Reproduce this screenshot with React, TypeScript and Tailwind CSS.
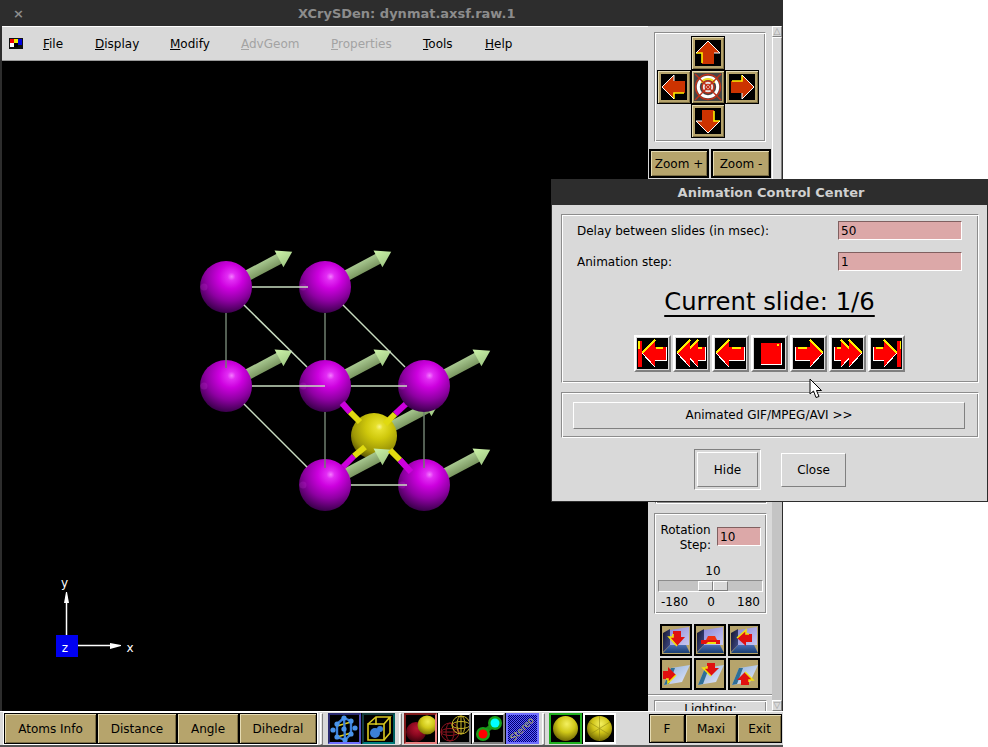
import type { ReactNode } from "react"

const groove = "border border-t-[#8c8c8c] border-l-[#8c8c8c] border-r-white border-b-white shadow-[inset_1px_1px_0_#fff,inset_-1px_-1px_0_#8c8c8c]"
const raised = "border border-t-white border-l-white border-r-[#808080] border-b-[#808080]"
const tanFace = "bg-[#b6a46c] shadow-[inset_1px_1px_0_#e6dcb4,inset_-1px_-1px_0_#7c6e44] flex items-center justify-center text-[12px] text-black"
const tanBtn = `${tanFace} border-2 border-black`
const pinkInput = "bg-[#dca8a8] border border-t-[#806060] border-l-[#806060] border-r-white border-b-white text-[12px] pl-[2px] flex items-center text-black"

const menus = [
  { label: "File", w: "w-[52px]" },
  { label: "Display", w: "w-[75px]" },
  { label: "Modify", w: "w-[71px]" },
  { label: "AdvGeom", w: "w-[90px]", off: true },
  { label: "Properties", w: "w-[92px]", off: true },
  { label: "Tools", w: "w-[62px]" },
  { label: "Help", w: "w-[50px]" },
]

const purple = [
  [226, 287],
  [325, 287],
  [226, 386],
  [325, 386],
  [424, 386],
  [325, 485],
  [424, 485],
]

const lines = [
  { x1: 252, y1: 287, x2: 308, y2: 287, c: "#c8dcc0" },
  { x1: 252, y1: 386, x2: 325, y2: 386, c: "#c8dcc0" },
  { x1: 351, y1: 386, x2: 407, y2: 386, c: "#c8dcc0" },
  { x1: 351, y1: 485, x2: 407, y2: 485, c: "#c8dcc0" },
  { x1: 226, y1: 313, x2: 226, y2: 368, c: "#6f7f6f" },
  { x1: 325, y1: 313, x2: 325, y2: 360, c: "#6f7f6f" },
  { x1: 325, y1: 412, x2: 325, y2: 468, c: "#6f7f6f" },
  { x1: 424, y1: 412, x2: 424, y2: 468, c: "#6f7f6f" },
  { x1: 244, y1: 305, x2: 307, y2: 367, c: "#c8dcc0" },
  { x1: 343, y1: 305, x2: 405, y2: 367, c: "#c8dcc0" },
  { x1: 244, y1: 404, x2: 307, y2: 467, c: "#c8dcc0" },
]

const bonds = [
  { m: [342, 403], y: [350, 412], e: [360, 422] },
  { m: [407, 403], y: [395, 414], e: [385, 424] },
  { m: [343, 467], y: [354, 456], e: [365, 447] },
  { m: [411, 472], y: [400, 460], e: [390, 450] },
]

const Arrow3d = ({ x, y }: { x: number; y: number }) => (
  <g transform={`translate(${x} ${y}) rotate(-28)`}>
    <rect x={0} y={-5.5} width={61} height={11} fill="url(#shaft)" />
    <polygon points="60,-9.5 60,9.5 75,0" fill="url(#head)" />
  </g>
)

const Scene = () => (
  <svg viewBox="2 61 646 650" className="w-full h-full block">
    <defs>
      <radialGradient id="violet" cx="0.56" cy="0.3" r="0.78" fx="0.61" fy="0.3">
        <stop offset="0" stopColor="#f47cff" />
        <stop offset="0.1" stopColor="#e22cf4" />
        <stop offset="0.3" stopColor="#cc00de" />
        <stop offset="0.6" stopColor="#8e00a2" />
        <stop offset="1" stopColor="#200030" />
      </radialGradient>
      <radialGradient id="gold" cx="0.56" cy="0.3" r="0.78" fx="0.62" fy="0.3">
        <stop offset="0" stopColor="#f8f48c" />
        <stop offset="0.1" stopColor="#e6e02c" />
        <stop offset="0.35" stopColor="#cfc80c" />
        <stop offset="0.7" stopColor="#9c9606" />
        <stop offset="1" stopColor="#403c00" />
      </radialGradient>
      <linearGradient id="shaft" x1="0" y1="0" x2="0" y2="1">
        <stop offset="0" stopColor="#a8c890" />
        <stop offset="1" stopColor="#7a9660" />
      </linearGradient>
      <linearGradient id="head" x1="0" y1="0" x2="0" y2="1">
        <stop offset="0" stopColor="#cef4aa" />
        <stop offset="1" stopColor="#a0c884" />
      </linearGradient>
    </defs>
    <Arrow3d x={374} y={436} />
    <circle cx={374} cy={436} r={23} fill="url(#gold)" />
    {purple.map(([x, y]) => (
      <Arrow3d key={`${x}-${y}`} x={x} y={y} />
    ))}
    {bonds.map((b, i) => (
      <g key={i} strokeWidth={6}>
        <line x1={b.m[0]} y1={b.m[1]} x2={b.y[0]} y2={b.y[1]} stroke="#cc00dc" />
        <line x1={b.y[0]} y1={b.y[1]} x2={b.e[0]} y2={b.e[1]} stroke="#e0da10" />
      </g>
    ))}
    {purple.map(([x, y]) => (
      <g key={`${x}:${y}`}>
        <circle cx={x} cy={y} r={26} fill="url(#violet)" />
        <circle cx={x - 22} cy={y} r={3.5} fill="#e040f0" opacity={0.18} />
      </g>
    ))}
    <line x1={411} y1={472} x2={400} y2={460} stroke="#cc00dc" strokeWidth={6} />
    <line x1={342} y1={403} x2={350} y2={412} stroke="#cc00dc" strokeWidth={6} />
    {lines.map((l, i) => (
      <line key={i} x1={l.x1} y1={l.y1} x2={l.x2} y2={l.y2} stroke={l.c} strokeWidth={1.5} />
    ))}

    <rect x={56} y={635} width={22} height={22} fill="#0000f0" />
    <line x1={66.5} y1={635} x2={66.5} y2={600} stroke="#fff" strokeWidth={1.5} />
    <polygon points="64,603 69,603 67,592 66,592" fill="#fff" />
    <line x1={78} y1={645.5} x2={112} y2={645.5} stroke="#fff" strokeWidth={1.5} />
    <polygon points="110,643 110,649 121,646 121,645" fill="#fff" />
    <text x={64.5} y={587} fill="#fff" fontSize={12} textAnchor="middle">y</text>
    <text x={130} y={652} fill="#fff" fontSize={12} textAnchor="middle">x</text>
    <text x={65} y={652} fill="#fff" fontSize={12} textAnchor="middle">z</text>
  </svg>
)

// arrow shapes for the navigation pad, drawn pointing up then rotated
const NavArrow = ({ rot }: { rot: number }) => (
  <svg viewBox="0 0 26 26" className="w-[26px] h-[26px] block bg-black">
    <g transform={`rotate(${rot} 13 13)`}>
      <polygon points="13,1 25,13 19,13 19,24 7,24 7,13 1,13" fill="#cc3300" />
      <polyline points="1,13 7,13 7,23" fill="none" stroke="#ffee00" strokeWidth={1.6} />
      <polyline points="1,13 13,1 25,13 19,13" fill="none" stroke="#fff" strokeWidth={1} />
    </g>
  </svg>
)

const NavCenter = () => (
  <svg viewBox="0 0 26 26" className="w-[28px] h-[28px] block bg-[#444]">
    <circle cx={13} cy={13} r={11.5} fill="none" stroke="#c03018" strokeWidth={1.4} />
    <circle cx={13} cy={13} r={9} fill="none" stroke="#fff" strokeWidth={2.8} />
    <path d="M7 9a7 7 0 0 1 12 0" fill="none" stroke="#eedd22" strokeWidth={2} />
    <circle cx={13} cy={13} r={5.5} fill="#e8e8e8" stroke="#c03018" strokeWidth={1.4} />
    <circle cx={13} cy={13} r={2.6} fill="#fff" stroke="#c03018" strokeWidth={1} />
    <line x1={1} y1={1} x2={25} y2={25} stroke="#c03018" strokeWidth={1.3} />
    <line x1={25} y1={1} x2={1} y2={25} stroke="#c03018" strokeWidth={1.3} />
  </svg>
)

const NavBtn = ({ children }: { children: ReactNode }) => (
  <div className="w-[34px] h-[34px] bg-[#b6a46c] border border-black shadow-[inset_1px_1px_0_#e6dcb4,inset_-1px_-1px_0_#7c6e44] flex items-center justify-center">
    {children}
  </div>
)

// red player arrows: the base shape points left, "flip" mirrors it
const Head = ({ x }: { x: number }) => (
  <>
    <polygon points={`${x},15 ${x + 13},2 ${x + 13},29`} fill="#ff0000" />
    <line x1={x} y1={15} x2={x + 13} y2={2} stroke="#ffee00" strokeWidth={1.5} />
    <line x1={x} y1={15} x2={x + 13} y2={29} stroke="#fff" strokeWidth={1} />
  </>
)

const Shaft = ({ x }: { x: number }) => (
  <>
    <rect x={x} y={9} width={29 - x} height={13} fill="#ff0000" />
    <rect x={x + 3} y={9} width={26 - x - 3} height={2} fill="#ffee00" />
    <polyline points={`${x},22 29,22 29,9`} fill="none" stroke="#fff" strokeWidth={1} />
  </>
)

const PlayIcon = ({ kind, flip }: { kind: string; flip?: boolean }) => (
  <svg viewBox="0 0 31 31" className="w-[31px] h-[31px] block bg-black" shapeRendering="crispEdges">
    <g transform={flip ? "translate(31 0) scale(-1 1)" : undefined}>
      {kind === "end" && (
        <>
          <Shaft x={16} />
          <Head x={5} />
          <rect x={1} y={3} width={4} height={26} fill="#ff0000" />
          <rect x={1} y={3} width={1.5} height={8} fill="#ffee00" />
        </>
      )}
      {kind === "fast" && (
        <>
          <Shaft x={19} />
          <Head x={9} />
          <Head x={1} />
        </>
      )}
      {kind === "step" && (
        <>
          <Shaft x={14} />
          <Head x={1} />
        </>
      )}
    </g>
    {kind === "stop" && (
      <>
        <rect x={7} y={5} width={20} height={21} fill="#ff0000" />
        <polyline points="7,26 27,26 27,5" fill="none" stroke="#fff" strokeWidth={1} />
        <rect x={23} y={6} width={2} height={2} fill="#ffee00" />
      </>
    )}
  </svg>
)

const playButtons = [
  { kind: "end" },
  { kind: "fast" },
  { kind: "step" },
  { kind: "stop" },
  { kind: "step", flip: true },
  { kind: "fast", flip: true },
  { kind: "end", flip: true },
]

// wall / floor icons of the view buttons
const WallIcon = ({ rot }: { rot: number }) => (
  <svg viewBox="0 0 28 28" className="w-[28px] h-[28px] block">
    <defs>
      <linearGradient id="wall" x1="0" y1="0" x2="1" y2="1">
        <stop offset="0" stopColor="#8c88d8" />
        <stop offset="1" stopColor="#c8c8f0" />
      </linearGradient>
      <linearGradient id="side" x1="0" y1="0" x2="1" y2="1">
        <stop offset="0" stopColor="#14142c" />
        <stop offset="1" stopColor="#445090" />
      </linearGradient>
      <linearGradient id="floor" x1="0" y1="0" x2="0" y2="1">
        <stop offset="0" stopColor="#4a6eb4" />
        <stop offset="1" stopColor="#183c70" />
      </linearGradient>
    </defs>
    <rect width={28} height={28} fill="#b6a46c" />
    <polygon points="8,4 27,1 27,19 8,19" fill="url(#wall)" />
    <polygon points="1,7 8,3 8,19 1,26" fill="url(#side)" />
    <polygon points="8,19 24,19 28,27 1,27" fill="url(#floor)" />
    <g transform={`rotate(${rot} 15 12)`}>
      <polygon points="11,5 19,5 19,11 23,11 15,20 7,11 11,11" fill="#e01010" />
      <polyline points="11,8 11,11 7,11 15,20" fill="none" stroke="#f0e010" strokeWidth={1.6} />
    </g>
  </svg>
)

const FlatIcon = () => (
  <svg viewBox="0 0 28 28" className="w-[28px] h-[28px] block">
    <rect width={28} height={28} fill="#b6a46c" />
    <polygon points="8,4 27,1 27,19 8,19" fill="url(#wall)" />
    <polygon points="1,7 8,3 8,19 1,26" fill="url(#side)" />
    <polygon points="8,19 24,19 28,27 1,27" fill="url(#floor)" />
    <polygon points="5,14 14,14 14,10 18,10 18,14 24,14 24,18 5,18" fill="#e01010" />
    <polygon points="12,10 19,10 21,14 10,14" fill="#f03010" />
    <polygon points="10,18 20,18 20,16 12,16" fill="#f0e010" />
  </svg>
)

const PlateIcon = ({ ax, ay, rot }: { ax: number; ay: number; rot: number }) => (
  <svg viewBox="0 0 28 28" className="w-[28px] h-[28px] block">
    <defs>
      <linearGradient id="plate" x1="0" y1="0" x2="1" y2="1">
        <stop offset="0" stopColor="#8cb0d8" />
        <stop offset="1" stopColor="#e8e8fa" />
      </linearGradient>
    </defs>
    <rect width={28} height={28} fill="#b6a46c" />
    <polygon points="9,8 28,5 20,22 2,25" fill="url(#plate)" />
    <polygon points="9,8 13,8 7,24 2,25" fill="#2f6f96" />
    <g transform={`translate(${ax} ${ay}) rotate(${rot})`}>
      <polygon points="-4,-6 4,-6 4,-1 8,-1 0,7 -8,-1 -4,-1" fill="#e01010" />
      <polyline points="-4,-3 -4,-1 -8,-1 0,7" fill="none" stroke="#f0e010" strokeWidth={1.5} />
    </g>
  </svg>
)

const Frame = ({ className, children }: { className: string; children?: ReactNode }) => (
  <div className={`${groove} ${className}`}>{children}</div>
)

const IconCell = ({ top, bottom, children }: { top: string; bottom: string; children: ReactNode }) => (
  <div className={`w-[33px] h-[31px] bg-black border-2 ${top} ${bottom} overflow-hidden`}>{children}</div>
)

const BarSep = () => <div className={`w-[3px] h-[32px] ${raised} bg-[#e4e4e4]`} />

const Ball = ({ id, hi, mid, lo, cx = 14, cy = 13, r = 12 }: { id: string; hi: string; mid: string; lo: string; cx?: number; cy?: number; r?: number }) => (
  <>
    <defs>
      <radialGradient id={id} cx="0.55" cy="0.32" r="0.75">
        <stop offset="0" stopColor={hi} />
        <stop offset="0.45" stopColor={mid} />
        <stop offset="1" stopColor={lo} />
      </radialGradient>
    </defs>
    <circle cx={cx} cy={cy} r={r} fill={`url(#${id})`} />
  </>
)

const icons = {
  crystal: (
    <svg viewBox="0 0 29 27" className="w-[29px] h-[27px] block">
      <g stroke="#e0d020" strokeWidth={1.4}>
        <line x1={7} y1={11} x2={21} y2={7} />
        <line x1={7} y1={22} x2={21} y2={18} />
      </g>
      <g stroke="#3c80d8" strokeWidth={2.4}>
        <line x1={7} y1={9} x2={7} y2={22} />
        <line x1={21} y1={6} x2={21} y2={19} />
        <line x1={7} y1={9} x2={14} y2={3} />
        <line x1={14} y1={3} x2={21} y2={6} />
        <line x1={7} y1={22} x2={15} y2={25} />
        <line x1={15} y1={25} x2={21} y2={19} />
        <line x1={14} y1={3} x2={15} y2={25} />
      </g>
      {[[7, 9], [14, 3], [21, 6], [7, 22], [15, 25], [21, 19], [14, 14], [3, 15], [25, 13]].map(([x, y]) => (
        <circle key={`${x}${y}`} cx={x} cy={y} r={2.6} fill="#4a94ea" />
      ))}
    </svg>
  ),
  cell: (
    <svg viewBox="0 0 28 27" className="w-[28px] h-[27px] block">
      <circle cx={11} cy={18} r={5} fill="#3c80d8" />
      <circle cx={16} cy={14} r={3} fill="#3c80d8" />
      <g fill="none" stroke="#d8c820" strokeWidth={1.6}>
        <polygon points="4,9 20,9 20,25 4,25" />
        <polyline points="4,9 12,2 26,2 20,9" />
        <polyline points="26,2 26,18 20,25" />
        <line x1={12} y1={2} x2={12} y2={10} />
      </g>
    </svg>
  ),
  solid: (
    <svg viewBox="0 0 30 27" className="w-[30px] h-[27px] block">
      <Ball id="b1" hi="#b81830" mid="#8c0820" lo="#300008" cx={10} cy={17} r={10} />
      <Ball id="b2" hi="#f0ec50" mid="#d0c818" lo="#6c6400" cx={21} cy={10} r={9.5} />
    </svg>
  ),
  wire: (
    <svg viewBox="0 0 30 27" className="w-[30px] h-[27px] block" fill="none">
      <g stroke="#8c1420" strokeWidth={1}>
        <circle cx={10} cy={17} r={9} />
        <ellipse cx={10} cy={17} rx={4} ry={9} />
        <ellipse cx={10} cy={17} rx={9} ry={3.5} />
        <line x1={1} y1={17} x2={19} y2={17} />
      </g>
      <g stroke="#c8b428" strokeWidth={1}>
        <circle cx={21} cy={10} r={9} />
        <ellipse cx={21} cy={10} rx={4} ry={9} />
        <ellipse cx={21} cy={10} rx={9} ry={3.5} />
        <line x1={21} y1={1} x2={21} y2={19} />
      </g>
    </svg>
  ),
  glasses: (
    <svg viewBox="0 0 29 27" className="w-[29px] h-[27px] block">
      <line x1={10} y1={17} x2={21} y2={9} stroke="#188c18" strokeWidth={5} />
      <circle cx={9} cy={19} r={7} fill="#18a018" />
      <circle cx={21} cy={8} r={7} fill="#18a018" />
      <circle cx={9} cy={19} r={4.5} fill="#ff0000" />
      <circle cx={21} cy={8} r={4.5} fill="#00ffff" />
    </svg>
  ),
  stereo: (
    <svg viewBox="0 0 29 27" className="w-[29px] h-[27px] block">
      <defs>
        <pattern id="dots" width={2} height={2} patternUnits="userSpaceOnUse">
          <rect width={2} height={2} fill="#000070" />
          <rect width={1} height={1} fill="#5a5aff" />
          <rect x={1} y={1} width={1} height={1} fill="#5a5aff" />
        </pattern>
      </defs>
      <rect width={29} height={27} fill="url(#dots)" />
      <text x={14} y={17} fontSize={9} fill="#b4b468" textAnchor="middle" transform="rotate(-45 14 14)">Stereo</text>
    </svg>
  ),
  shiny: (
    <svg viewBox="0 0 29 27" className="w-[29px] h-[27px] block">
      <Ball id="b3" hi="#f4f060" mid="#d0c818" lo="#5c5400" cx={14.5} cy={13.5} r={12.5} />
    </svg>
  ),
  facet: (
    <svg viewBox="0 0 29 27" className="w-[29px] h-[27px] block">
      <Ball id="b4" hi="#f4f060" mid="#cfc418" lo="#5c5400" cx={14.5} cy={13.5} r={12.5} />
      <g stroke="#8c8410" strokeWidth={0.7} opacity={0.8}>
        <line x1={14.5} y1={13.5} x2={14.5} y2={1} />
        <line x1={14.5} y1={13.5} x2={4} y2={7} />
        <line x1={14.5} y1={13.5} x2={25} y2={7} />
        <line x1={14.5} y1={13.5} x2={4} y2={20} />
        <line x1={14.5} y1={13.5} x2={25} y2={20} />
        <line x1={14.5} y1={13.5} x2={14.5} y2={26} />
      </g>
    </svg>
  ),
}

const App = () => {
  return (
    <div className="relative w-[988px] h-[747px] bg-white overflow-hidden [font-family:'DejaVu_Sans',sans-serif]">
      <div className="w-[783px] h-full flex flex-col bg-[#2d2d2d]">
        <div className="h-[26px] flex items-center text-[#8c8c8c] font-bold shrink-0">
          <span className="ml-[13px] text-[13px] leading-none">×</span>
          <span className="ml-[274px] text-[13px] leading-none">XCrySDen: dynmat.axsf.raw.1</span>
        </div>

        <div className="h-[685px] ml-[2px] mr-[1px] flex shrink-0 bg-[#d9d9d9]">
          <div className="w-[646px] flex flex-col">
            <div className="h-[35px] flex items-center bg-[#d9d9d9] border-t border-white border-b border-b-[#9a9a9a] text-[12px] shrink-0">
              <svg viewBox="0 0 14 11" className="w-[14px] h-[11px] ml-[7px] mr-[20px] block" shapeRendering="crispEdges">
                <rect width={14} height={11} fill="#111" />
                <rect x={1} y={1} width={4} height={4} fill="#f00000" />
                <rect x={5} y={1} width={4} height={4} fill="#f0f000" />
                <rect x={9} y={1} width={4} height={6} fill="#0000e0" />
                <rect x={1} y={5} width={4} height={4} fill="#fff" />
                <rect x={5} y={5} width={4} height={4} fill="#000" />
              </svg>
              {menus.map((m) => (
                <span key={m.label} className={`${m.w} ${m.off ? "text-[#a3a3a3]" : "text-black"}`}>
                  <u>{m.label[0]}</u>
                  {m.label.slice(1)}
                </span>
              ))}
            </div>
            <div className="flex-1 bg-black">
              <Scene />
            </div>
          </div>

          <div className="w-[124px] h-full overflow-hidden shrink-0 flex flex-col">
            <Frame className="ml-[6px] mt-[6px] w-[112px] h-[110px] shrink-0 pt-[3px]">
              <div className="grid grid-cols-[34px_34px_34px] pl-[2px]">
                <div />
                <NavBtn><NavArrow rot={0} /></NavBtn>
                <div />
                <NavBtn><NavArrow rot={-90} /></NavBtn>
                <NavBtn><NavCenter /></NavBtn>
                <NavBtn><NavArrow rot={90} /></NavBtn>
                <div />
                <NavBtn><NavArrow rot={180} /></NavBtn>
                <div />
              </div>
            </Frame>
            <div className="flex gap-[2px] mt-[7px] ml-[1px] shrink-0">
              <div className={`${tanBtn} w-[60px] h-[29px]`}>Zoom +</div>
              <div className={`${tanBtn} w-[60px] h-[29px]`}>Zoom -</div>
            </div>
            <Frame className="ml-[7px] mt-[4px] w-[112px] h-[322px] shrink-0" />
            <Frame className="ml-[6px] mt-[9px] w-[113px] h-[101px] shrink-0 text-[12px] text-black">
              <div className="flex items-start pl-[5px] pt-[9px]">
                <div className="w-[51px] text-right leading-[15px]">
                  <div className="text-center">Rotation</div>
                  <div>Step:</div>
                </div>
                <div className={`${pinkInput} w-[44px] h-[19px] ml-[6px] mt-[4px]`}>10</div>
              </div>
              <div className="text-center leading-none mt-[12px] pl-[5px]">10</div>
              <div className="mx-[3px] mt-[3px] h-[12px] bg-[#c4c4c4] border border-t-[#8c8c8c] border-l-[#8c8c8c] border-r-white border-b-white flex pl-[39px]">
                <div className={`w-[15px] h-full bg-[#d9d9d9] ${raised}`} />
                <div className={`w-[15px] h-full bg-[#d9d9d9] ${raised}`} />
              </div>
              <div className="flex justify-between px-[6px] mt-[4px] leading-none">
                <span>-180</span>
                <span className="mr-[3px]">0</span>
                <span>180</span>
              </div>
            </Frame>
            <div className="grid grid-cols-[32px_32px_32px] gap-[2px] ml-[12px] mt-[10px] shrink-0">
              {[
                <WallIcon key="a" rot={0} />,
                <FlatIcon key="b" />,
                <WallIcon key="c" rot={90} />,
                <PlateIcon key="d" ax={7} ay={15} rot={-90} />,
                <PlateIcon key="e" ax={15} ay={9} rot={0} />,
                <PlateIcon key="f" ax={15} ay={19} rot={180} />,
              ].map((icon, i) => (
                <div key={i} className="w-[32px] h-[32px] border-2 border-black flex items-center justify-center bg-[#b6a46c]">{icon}</div>
              ))}
            </div>
            <div className="h-[2px] mt-[4px] shrink-0 border-t border-t-[#8c8c8c] border-b border-b-white" />
            <Frame className="ml-[6px] mt-[4px] w-[113px] h-[40px] shrink-0 text-[12px] leading-none text-center text-black pt-[2px]">Lighting:</Frame>
          </div>

          <div className="w-[10px] h-full flex flex-col bg-[#c4c4c4] shrink-0">
            <div className={`h-[11px] bg-[#d9d9d9] ${raised} flex items-center justify-center text-[#9a9a9a] text-[9px] leading-none shrink-0`}>△</div>
            <div className={`h-[445px] bg-[#d9d9d9] ${raised} shrink-0`} />
            <div className="flex-1" />
            <div className={`h-[11px] bg-[#d9d9d9] ${raised} flex items-center justify-center text-[#9a9a9a] text-[9px] leading-none shrink-0`}>▽</div>
          </div>
        </div>

        <div className="h-[36px] shrink-0 flex items-center bg-[#d9d9d9] border-t border-white border-b-2 border-b-[#555] text-[12px] text-black">
          <div className="ml-[3px] flex gap-[2px] bg-black border border-white p-[1px] shrink-0">
            <div className={`${tanFace} w-[91px] h-[29px]`}>Atoms Info</div>
            <div className={`${tanFace} w-[78px] h-[29px]`}>Distance</div>
            <div className={`${tanFace} w-[60px] h-[29px]`}>Angle</div>
            <div className={`${tanFace} w-[76px] h-[29px]`}>Dihedral</div>
          </div>
          <div className="ml-[2px]"><BarSep /></div>
          <div className="ml-[5px] flex gap-px bg-black">
            <IconCell top="border-t-[#2a2a70] border-l-[#2a2a70]" bottom="border-b-[#7070ff] border-r-[#5050c0]">{icons.crystal}</IconCell>
            <IconCell top="border-t-[#143c3c] border-l-[#143c3c]" bottom="border-b-[#008080] border-r-[#006060]">{icons.cell}</IconCell>
          </div>
          <div className="ml-[4px]"><BarSep /></div>
          <div className="ml-[2px] flex gap-[1px] bg-black">
            <IconCell top="border-t-[#801c1c] border-l-[#801c1c]" bottom="border-b-[#e88080] border-r-[#e88080]">{icons.solid}</IconCell>
            <IconCell top="border-t-white border-l-white" bottom="border-b-[#808080] border-r-[#808080]">{icons.wire}</IconCell>
            <IconCell top="border-t-white border-l-white" bottom="border-b-[#808080] border-r-[#808080]">{icons.glasses}</IconCell>
            <IconCell top="border-t-[#7070ff] border-l-[#7070ff]" bottom="border-b-[#7070ff] border-r-[#7070ff]">{icons.stereo}</IconCell>
          </div>
          <div className="ml-[3px]"><BarSep /></div>
          <div className="ml-[4px] flex gap-[1px] bg-black">
            <IconCell top="border-t-[#20b020] border-l-[#20b020]" bottom="border-b-[#20b020] border-r-[#20b020]">{icons.shiny}</IconCell>
            <IconCell top="border-t-white border-l-white" bottom="border-b-white border-r-white">{icons.facet}</IconCell>
          </div>
          <div className="ml-[33px] flex gap-[2px] bg-black p-[1px]">
            <div className={`${tanFace} w-[34px] h-[27px]`}>F</div>
            <div className={`${tanFace} w-[50px] h-[27px]`}>Maxi</div>
            <div className={`${tanFace} w-[43px] h-[27px]`}>Exit</div>
          </div>
        </div>
      </div>

      <div className="absolute left-[551px] top-[179px] w-[437px] h-[323px] bg-[#d9d9d9] border border-[#2d2d2d] text-[12px] text-black flex flex-col">
        <div className="h-[25px] bg-[#2d2d2d] text-[#d0d0d0] font-bold text-[13px] flex items-center justify-center shrink-0 pl-[3px]">
          Animation Control Center
        </div>
        <Frame className="ml-[9px] mr-[8px] mt-[9px] h-[169px] shrink-0 flex flex-col">
          <div className="flex items-center justify-between pl-[15px] pr-[16px] mt-[6px] h-[19px]">
            <span>Delay between slides (in msec):</span>
            <div className={`${pinkInput} w-[124px] h-[19px]`}>50</div>
          </div>
          <div className="flex items-center justify-between pl-[15px] pr-[16px] mt-[12px] h-[19px]">
            <span>Animation step:</span>
            <div className={`${pinkInput} w-[124px] h-[19px]`}>1</div>
          </div>
          <div className="text-center text-[24.3px] leading-none underline decoration-2 underline-offset-[5px] mt-[19px] pr-[1px]">Current slide: 1/6</div>
          <div className="flex justify-center gap-[2px] mt-[21px] pr-[2px]">
            {playButtons.map((b, i) => (
              <div key={i} className="w-[37px] h-[37px] flex items-center justify-center border-2 border-t-white border-l-white border-r-[#808080] border-b-[#808080]">
                <PlayIcon kind={b.kind} flip={b.flip} />
              </div>
            ))}
          </div>
        </Frame>
        <Frame className="ml-[9px] mr-[8px] mt-[9px] h-[46px] shrink-0 flex items-center pl-[11px]">
          <div className={`${raised} w-[392px] h-[27px] flex items-center justify-center`}>Animated GIF/MPEG/AVI &gt;&gt;</div>
        </Frame>
        <div className="flex items-center justify-center gap-[20px] mt-[11px] pl-[1px]">
          <div className="w-[67px] h-[41px] border border-t-[#808080] border-l-[#808080] border-r-white border-b-white p-[2px]">
            <div className={`${raised} w-full h-full flex items-center justify-center`}>Hide</div>
          </div>
          <div className={`${raised} w-[65px] h-[34px] flex items-center justify-center`}>Close</div>
        </div>
      </div>

      <svg viewBox="0 0 14 21" className="absolute left-[809px] top-[378px] w-[14px] h-[21px]">
        <polygon points="1,1 1,16 4.5,13 7,19.5 10,18.5 7.5,12.5 12.5,12.5" fill="#fff" stroke="#000" strokeWidth={1} />
      </svg>
    </div>
  )
}

export default App
